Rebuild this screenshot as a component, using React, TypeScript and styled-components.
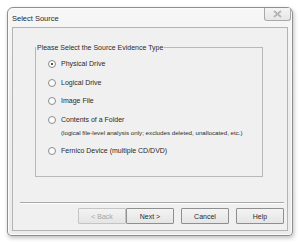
import React from "react";
import styled, { createGlobalStyle } from "styled-components";

const GlobalStyle = createGlobalStyle`
  html, body {
    margin: 0;
    padding: 0;
    background: #ffffff;
  }
  body {
    font-family: "Liberation Sans", Arial, sans-serif;
    color: #1e1e1e;
  }
`;

const Page = styled.div`
  width: 300px;
  height: 242px;
  padding: 7px 0 0 7px;
  box-sizing: border-box;
`;

const Window = styled.div`
  width: 286px;
  height: 229px;
  box-sizing: border-box;
  border: 1px solid #8e8e8e;
  border-radius: 6px 6px 4px 4px;
  background: linear-gradient(#f7f7f7, #eeeeee 40%, #ececec);
  box-shadow: 1px 2px 4px rgba(0, 0, 0, 0.25), inset 0 0 0 1px #fbfbfb;
  padding: 0 4px 4px 4px;
  display: flex;
  flex-direction: column;
`;

const TitleBar = styled.div`
  height: 19px;
  display: flex;
  align-items: flex-start;
  justify-content: space-between;
  margin-right: -3px;
`;

const Title = styled.span`
  font-size: 7.5px;
  padding-top: 6px;
  color: #2a2a2a;
`;

const CloseButton = styled.div`
  width: 27px;
  height: 13px;
  box-sizing: border-box;
  border: 1px solid #a9a9a9;
  border-top: none;
  border-radius: 0 0 3px 3px;
  background: linear-gradient(#f4f4f4, #e6e6e6);
  display: flex;
  align-items: center;
  justify-content: center;
`;

const Client = styled.div`
  flex: 1;
  border: 1px solid #b4b4b4;
  background: #f0f0f0;
  display: flex;
  flex-direction: column;
  padding: 0 3px 0 7px;
`;

const GroupBox = styled.fieldset`
  margin: 16px 0 0 15px;
  width: 228px;
  height: 133px;
  box-sizing: border-box;
  border: 1px solid #b8b8b8;
  border-radius: 0;
  padding: 8px 0 0 12px;
  display: flex;
  flex-direction: column;
`;

const Legend = styled.legend`
  font-size: 7px;
  padding: 0 1px;
  margin-left: -12px;
  color: #2a2a2a;
`;

const Option = styled.label<{ tall?: boolean }>`
  display: flex;
  align-items: flex-start;
  gap: 5px;
  font-size: 7px;
  line-height: 9px;
  height: ${(p) => (p.tall ? "31px" : "18.5px")};
  color: #2a2a2a;
`;

const Radio = styled.span<{ checked?: boolean }>`
  width: 6px;
  height: 6px;
  margin-top: 1px;
  border-radius: 50%;
  border: 1px solid #8c8c8c;
  background: #fbfbfb;
  flex: none;
  display: flex;
  align-items: center;
  justify-content: center;
  &::after {
    content: "";
    width: 2px;
    height: 2px;
    border-radius: 50%;
    background: ${(p) => (p.checked ? "#222" : "transparent")};
  }
`;

const Texts = styled.div`
  display: flex;
  flex-direction: column;
  gap: 4px;
`;

const SubText = styled.span`
  font-size: 6.2px;
`;

const Separator = styled.div`
  margin: 25px 0 0 0;
  height: 0;
  border-top: 1px solid #a8a8a8;
  border-bottom: 1px solid #fdfdfd;
`;

const ButtonRow = styled.div`
  display: flex;
  justify-content: flex-end;
  margin-top: 4px;
`;

const Button = styled.button<{ disabled?: boolean; gapLeft?: number }>`
  width: 48px;
  height: 16px;
  margin-left: ${(p) => p.gapLeft ?? 0}px;
  box-sizing: border-box;
  border: 1px solid #9a9a9a;
  border-radius: 1px;
  background: linear-gradient(#f3f3f3, #e5e5e5);
  font-family: "Liberation Sans", Arial, sans-serif;
  font-size: 7px;
  color: ${(p) => (p.disabled ? "#a6a6a6" : "#2a2a2a")};
  border-color: ${(p) => (p.disabled ? "#c4c4c4" : "#8f8f8f")};
  padding: 0;
`;

const CloseIcon = () => (
  <svg width="9" height="8" viewBox="0 0 9 8">
    <path d="M1 1 L8 7 M8 1 L1 7" stroke="#8a8a8a" strokeWidth="1.6" fill="none" />
    <path d="M1 1 L8 7 M8 1 L1 7" stroke="#f4f4f4" strokeWidth="0.5" fill="none" />
  </svg>
);

export default function App() {
  return (
    <>
      <GlobalStyle />
      <Page>
        <Window>
          <TitleBar>
            <Title>Select Source</Title>
            <CloseButton>
              <CloseIcon />
            </CloseButton>
          </TitleBar>
          <Client>
            <GroupBox>
              <Legend>Please Select the Source Evidence Type</Legend>
              <Option>
                <Radio checked />
                <span>Physical Drive</span>
              </Option>
              <Option>
                <Radio />
                <span>Logical Drive</span>
              </Option>
              <Option>
                <Radio />
                <span>Image File</span>
              </Option>
              <Option tall>
                <Radio />
                <Texts>
                  <span>Contents of a Folder</span>
                  <SubText>
                    (logical file-level analysis only; excludes deleted, unallocated, etc.)
                  </SubText>
                </Texts>
              </Option>
              <Option>
                <Radio />
                <span>Fernico Device (multiple CD/DVD)</span>
              </Option>
            </GroupBox>
            <Separator />
            <ButtonRow>
              <Button disabled>&lt; Back</Button>
              <Button>Next &gt;</Button>
              <Button gapLeft={7}>Cancel</Button>
              <Button gapLeft={7}>Help</Button>
            </ButtonRow>
          </Client>
        </Window>
      </Page>
    </>
  );
}
